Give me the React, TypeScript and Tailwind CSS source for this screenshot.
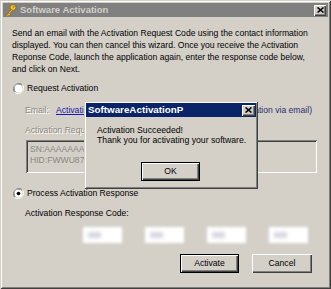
import React from "react"

const font = "font-['Liberation_Sans',Arial,sans-serif]"
const disabled = "text-[#8a8780] [text-shadow:1px_1px_0_#ffffff]"

const KeyIcon = () => (
  <svg width="12" height="13" viewBox="0 0 12 13">
    <circle cx="8" cy="3.5" r="3" fill="#f2c230" stroke="#a06d00" strokeWidth="1" />
    <circle cx="8.6" cy="2.8" r="0.9" fill="#7f7f7f" />
    <path d="M6.2 5.6 L1.6 11.6 L3 12.4 L3.8 11.2 L4.8 11.6 L5.4 10.4 L4.6 9.9 L7.6 6.2 Z" fill="#f2c230" stroke="#a06d00" strokeWidth="0.7" />
  </svg>
)

const CloseBox = ({ className = "" }: { className?: string }) => (
  <div
    className={`flex items-center justify-center bg-[#d4d0c8] shadow-[inset_1px_1px_#ffffff,inset_-1px_-1px_#404040,inset_-2px_-2px_#808080] ${className}`}
  >
    <svg width="7" height="6" viewBox="0 0 7 6">
      <path d="M0.5 0.5 L6.5 5.5 M6.5 0.5 L0.5 5.5" stroke="#000" strokeWidth="1.6" />
    </svg>
  </div>
)

const Radio = ({ checked }: { checked?: boolean }) => (
  <svg width="11" height="11" viewBox="0 0 12 12">
    <path d="M10.2 1.8 A6 6 0 0 0 1.8 10.2" fill="none" stroke="#808080" strokeWidth="1" />
    <path d="M9.4 2.6 A4.9 4.9 0 0 0 2.6 9.4" fill="none" stroke="#404040" strokeWidth="1" />
    <path d="M1.8 10.2 A6 6 0 0 0 10.2 1.8" fill="none" stroke="#ffffff" strokeWidth="1" />
    <circle cx="6" cy="6" r="4.3" fill="#ffffff" />
    {checked && <circle cx="6" cy="6" r="2" fill="#000" />}
  </svg>
)

const Button = ({ label, primary }: { label: string; primary?: boolean }) => (
  <div
    className={`flex h-[19px] items-center justify-center bg-[#d4d0c8] text-[8.6px] text-black ${
      primary
        ? "w-[59px] border border-black shadow-[inset_1px_1px_#ffffff,inset_-1px_-1px_#404040,inset_-2px_-2px_#808080]"
        : "w-[60px] shadow-[inset_1px_1px_#ffffff,inset_-1px_-1px_#404040,inset_-2px_-2px_#808080]"
    }`}
  >
    {label}
  </div>
)

// response code fields are blurred out in the picture
const BlurBox = () => (
  <div className="relative h-[16px] w-[39px] bg-white blur-[1.5px]">
    <div className="absolute left-[5px] top-[5px] h-[6px] w-[13px] bg-[#d8d7e2] blur-[1px]" />
  </div>
)

const SuccessDialog = () => (
  <div className="absolute left-[84px] top-[101px] flex h-[88px] w-[174px] flex-col bg-[#d4d0c8] p-[2px] shadow-[inset_1px_1px_#d4d0c8,inset_-1px_-1px_#404040,inset_2px_2px_#ffffff,inset_-2px_-2px_#808080]">
    <div className="flex h-[14px] items-center justify-between bg-[#0a246a] pl-[2px] pr-[1px]">
      <span className="text-[9.8px] font-bold text-white">SoftwareActivationP</span>
      <CloseBox className="h-[11px] w-[13px]" />
    </div>
    <div className="mt-[8px] pl-[11px] text-[8.7px] leading-[10px] text-black">
      <div>Activation Succeeded!</div>
      <div>Thank you for activating your software.</div>
    </div>
    <div className="mt-[17px] flex pl-[55px]">
      <Button label="OK" primary />
    </div>
  </div>
)

const App = () => (
  <div className={`${font} relative h-[289px] w-[331px] overflow-hidden`}>
    <div className="flex h-full w-full flex-col bg-[#d4d0c8] p-[3px] shadow-[inset_1px_1px_#d4d0c8,inset_-1px_-1px_#404040,inset_2px_2px_#ffffff,inset_-2px_-2px_#808080]">
      <div className="flex h-[14px] items-center justify-between bg-[#808080] pl-[2px] pr-[2px]">
        <div className="flex items-center gap-[3px]">
          <KeyIcon />
          <span className="text-[9.5px] font-bold text-[#d4d0c8]">Software Activation</span>
        </div>
        <CloseBox className="h-[11px] w-[12px]" />
      </div>

      <div className="pl-[9px] pt-[10px] text-[8.6px] text-black">
        <p className="w-[302px] leading-[12px]">
          Send an email with the Activation Request Code using the contact information
          displayed. You can then cancel this wizard. Once you receive the Activation
          Reponse Code, launch the application again, enter the response code below,
          and click on Next.
        </p>

        <div className="mt-[7px] flex h-[12px] items-center gap-[3px] pl-[1px]">
          <Radio />
          <span>Request Activation</span>
        </div>

        <div className="ml-[13px] mt-[10px] flex h-[12px] w-[287px] items-center">
          <span className={`w-[31px] ${disabled}`}>Email:</span>
          <span className="text-[#1a1aa6] underline">Activation@vendor.com</span>
          <span className="ml-auto text-[#2a2f6e]">(Send information via email)</span>
        </div>

        <div className={`ml-[13px] mt-[8px] h-[12px] leading-[12px] ${disabled}`}>
          Activation Request Code:
        </div>

        <div className="ml-[14px] mt-[4px] h-[33px] w-[291px] px-[4px] pt-[4px] leading-[11px] text-[#8a8780] shadow-[inset_1px_1px_#808080,inset_-1px_-1px_#ffffff,inset_2px_2px_#404040,inset_-2px_-2px_#d4d0c8]">
          <div>SN:AAAAAAAAAAAAAAAAAAAAAAAA</div>
          <div>HID:FWWU87XXXXXXXXXXXXXXXXX</div>
        </div>

        <div className="mt-[14px] flex h-[12px] items-center gap-[3px] pl-[1px]">
          <Radio checked />
          <span>Process Activation Response</span>
        </div>

        <div className="ml-[13px] mt-[8px] h-[12px] leading-[12px]">Activation Response Code:</div>

        <div className="ml-[71px] mt-[8px] flex gap-[23px]">
          <BlurBox />
          <BlurBox />
          <BlurBox />
          <BlurBox />
        </div>

        <div className="ml-[168px] mt-[11px] flex gap-[13px]">
          <Button label="Activate" primary />
          <Button label="Cancel" />
        </div>
      </div>
    </div>
    <SuccessDialog />
  </div>
)

export default App
